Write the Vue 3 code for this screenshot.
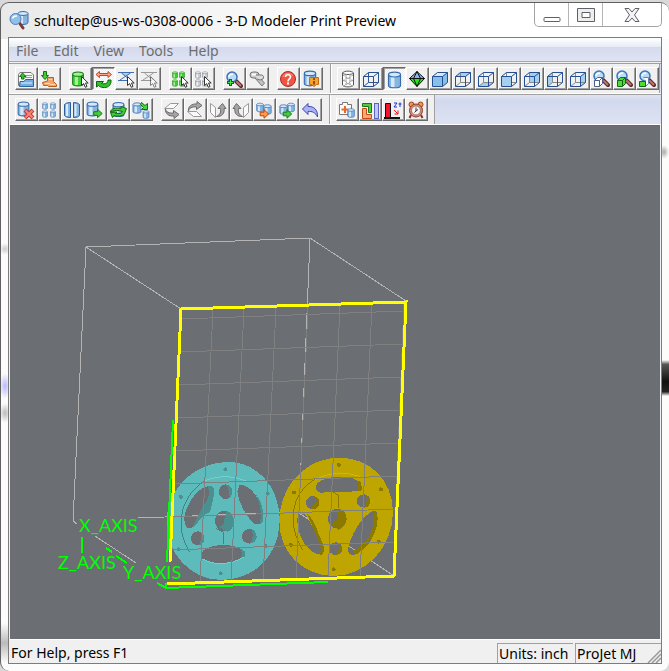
<script setup>
const menus = ['File', 'Edit', 'View', 'Tools', 'Help']

const mainBar = [
  [['open', 'Open'], ['import', 'Import']],
  [['select', 'Select'], ['move', 'Move and rotate', true], ['pick', 'Pick'], ['pickoff', 'Unpick']],
  [['selall', 'Select all'], ['selnone', 'Select none']],
  [['zoomin', 'Zoom in'], ['measure', 'Measure']],
  [['help', 'Help'], ['about', 'About']],
]

const viewBar = [
  [
    ['mesh', 'Mesh'], ['cube-wire', 'Wireframe'], ['solid', 'Shaded', true], ['octa', 'Perspective'],
    ['cube-solid', 'Isometric'], ['cube-top', 'Top'], ['cube-bottom', 'Bottom'], ['cube-front', 'Front'],
    ['cube-back', 'Back'], ['cube-left', 'Left'], ['cube-right', 'Right'],
    ['zoomwire', 'Zoom to volume'], ['zoompart', 'Zoom to parts'], ['zoomsel', 'Zoom to selection'],
  ],
]

const partBar = [
  [['delete', 'Delete'], ['array', 'Array'], ['mirror', 'Mirror'], ['shift', 'Move'], ['spin', 'Spin'], ['scale', 'Scale']],
  [['flip1', 'Flip down'], ['flip2', 'Flip up'], ['flip3', 'Flip left'], ['flip4', 'Flip right'], ['copy', 'Copy'], ['paste', 'Paste'], ['undo', 'Undo']],
]

const jobBar = [
  [['repair', 'Check'], ['nest', 'Arrange'], ['zsort', 'Z height'], ['time', 'Estimate time']],
]

const cubes = {
  wire: '',
  solid: 'M3 7H13V17H3ZM3 7L8 3H18V13L13 17Z',
  top: 'M3 7L8 3H18L13 7Z',
  bottom: 'M3 17L8 13H18L13 17Z',
  front: 'M3 7H13V17H3Z',
  back: 'M8 3H18V13H8Z',
  left: 'M3 7L8 3V13L3 17Z',
  right: 'M13 7L18 3V13L13 17Z',
}

const columns = [[213, 310, 200, 582], [244, 309, 231, 581], [276, 308, 263, 580], [308, 307, 296, 579], [340, 305, 328, 577], [372, 304, 360, 577], [404, 304, 393, 576]]
const rows = Array.from({ length: 8 }, (_, i) => [181 - i * 1.5, 319 + i * 33, 404 - i * 1.4, 311 + i * 33])
</script>

<template>
  <svg class="sprite" width="0" height="0" aria-hidden="true">
    <symbol id="cyl" viewBox="0 0 12 15">
      <path class="f" d="M1 3V12C1 14.600 11 14.600 11 12V3Z" />
      <path class="h" d="M3 4H6V13.500H3Z" />
      <path class="o" d="M1 3V12C1 14.600 11 14.600 11 12V3" />
      <ellipse class="t" cx="6" cy="3" rx="5" ry="2" />
    </symbol>
    <symbol id="cursor" viewBox="0 0 8 12">
      <path d="M.5.5V9.500L2.700 7.600L4.300 11.300L6 10.500L4.500 7H7.200Z" fill="#fff" stroke="#333" />
    </symbol>
    <symbol id="arrow" viewBox="0 0 10 10">
      <path d="M.7 3.200H4.500V.8L9.200 5L4.500 9.200V6.800H.7Z" fill="var(--f)" stroke="currentColor" />
    </symbol>
    <symbol id="lens" viewBox="0 0 18 18">
      <path d="M11 10L16 15" stroke="#5c2828" stroke-width="4" stroke-linecap="round" />
      <path d="M12 11L15.500 14.500" stroke="#b97777" stroke-width="2" stroke-linecap="round" />
      <circle cx="7" cy="6" r="5" fill="#b9dcf8" stroke="#3d74b6" stroke-width="1.500" />
      <path d="M4 6C4 3.500 6 3 8 3.200" stroke="#fff" stroke-width="1.500" fill="none" />
    </symbol>
    <symbol id="bend" viewBox="0 0 20 20">
      <path d="M2.500 8.500L8.500 3.500H16.500L11.500 8.500Z" fill="#fafafa" stroke="#999" />
      <path d="M3.500 9C4 12 7 13.500 11.500 13V10.500L17 14.500L12 18.500V16C6.500 16.500 3 13.500 3.500 9Z" fill="#a5a5a5" stroke="#6c6c6c" />
    </symbol>

    <symbol id="i-open" viewBox="0 0 20 20">
      <path d="M2.500 16.500V5.500L4 3.500H15L17.500 6V16.500Z" fill="#f5f5f5" stroke="#777" />
      <path d="M9 6.500H16M9 8.500H16" stroke="#999" />
      <path d="M3.500 17.500L4 12.500H8L9.500 10.500H17.500V17.500Z" fill="#76aee0" stroke="#2e64a4" />
      <path d="M5 14H16" stroke="#b9dcf6" stroke-width="1.500" />
      <path d="M3.500 7.500L6.500 4L10 7.500H8V10H5.500V7.500Z" fill="#35c235" stroke="#137013" />
    </symbol>
    <symbol id="i-import" viewBox="0 0 20 20">
      <path d="M4.500 2.500H7.500V6.500H9.500L6 10.500L2.500 6.500H4.500Z" fill="#3fd02d" stroke="#176d12" />
      <path d="M8.500 8.500H14.500V12.500L17.500 15.500V17.500H9.500L8.500 16.500H4.500L3.500 13.500L8.500 12Z" fill="#f2a66b" stroke="#bd5d1d" />
      <path d="M10 10.500H13M6 14.500H10L12 15.500H16" stroke="#ffd9b5" fill="none" />
    </symbol>
    <symbol id="i-select" viewBox="0 0 20 20">
      <use class="green" href="#cyl" x="1" y="2" width="14" height="16" />
      <use href="#cursor" x="11" y="7" width="8" height="12" />
    </symbol>
    <symbol id="i-move" viewBox="0 0 20 20">
      <path d="M3 5.500L6.500 2.500V4.500H15V2.500L18.500 5.500L15 8.500V6.500H6.500V8.500Z" fill="#f9a88d" stroke="#c44520" />
      <path d="M3.500 12.500H10.500L8.500 14.500C12 15.500 15 14.500 15 11H18C18.500 17 14 19 10 18.500C7.500 18.200 6.500 17.500 5.500 16.500L3.500 18Z" fill="#32c02c" stroke="#0c650e" />
    </symbol>
    <symbol id="i-pick" viewBox="0 0 20 20">
      <path d="M5 4H15L10 8Z" fill="#a9cbe9" />
      <path d="M2 3.500H18M2 11.500H13M5.500 4L14 11M14.500 4L4 11" fill="none" stroke="#3f70ad" />
      <use href="#cursor" x="11" y="7" width="8" height="12" />
    </symbol>
    <symbol id="i-pickoff" viewBox="0 0 20 20">
      <path d="M2 3.500H18M2 11.500H13M5.500 4L14 11M14.500 4L4 11" fill="none" stroke="#999" />
      <use href="#cursor" x="11" y="7" width="8" height="12" opacity=".6" />
    </symbol>
    <symbol id="i-selall" viewBox="0 0 20 20">
      <g class="green">
        <use href="#cyl" x="2" y="2" width="6" height="8" /><use href="#cyl" x="9" y="2" width="6" height="8" />
        <use href="#cyl" x="2" y="10" width="6" height="8" /><use href="#cyl" x="9" y="10" width="6" height="8" />
      </g>
      <use href="#cursor" x="11" y="7" width="8" height="12" />
    </symbol>
    <symbol id="i-selnone" viewBox="0 0 20 20">
      <g class="gray">
        <use href="#cyl" x="2" y="2" width="6" height="8" /><use href="#cyl" x="9" y="2" width="6" height="8" />
        <use href="#cyl" x="2" y="10" width="6" height="8" /><use href="#cyl" x="9" y="10" width="6" height="8" />
      </g>
      <use href="#cursor" x="11" y="7" width="8" height="12" />
    </symbol>
    <symbol id="i-zoomin" viewBox="0 0 20 20">
      <use href="#lens" x="1" y="2" width="18" height="18" />
      <path d="M6.500 10V17M3 13.500H10" stroke="#0c6a10" stroke-width="3" />
      <path d="M6.500 11V16M4 13.500H9" stroke="#4ee044" />
    </symbol>
    <symbol id="i-measure" viewBox="0 0 20 20">
      <path d="M8 9L15 17L17.500 14L11 7Z" fill="#c4c4c4" stroke="#777" />
      <rect x="3" y="3" width="9" height="6" rx="3" fill="#ccc" stroke="#777" />
      <path d="M8 6H15Q18 7 16 10Q13 12 10 10" fill="#ddd" stroke="#777" />
      <path d="M5 5.500H9" stroke="#fff" stroke-width="2" />
    </symbol>
    <symbol id="i-help" viewBox="0 0 20 20">
      <circle cx="10" cy="10" r="7.500" fill="#ee5543" stroke="#ad2d22" />
      <path d="M5 8C6 4 12 3 15 7" stroke="#f79b8e" fill="none" />
      <path d="M7.500 8C7.500 5 12.500 5 12.500 8C12.500 10 10 10 10 12.500" fill="none" stroke="#fff" stroke-width="1.600" />
      <rect x="9" y="13.500" width="2" height="2" fill="#fff" />
    </symbol>
    <symbol id="i-about" viewBox="0 0 20 20">
      <use class="blue" href="#cyl" x="2" y="1" width="14" height="17" />
      <path d="M8.500 8.500H17.500V15.500H15.500L13 17.500L10.500 15.500H8.500Z" fill="#f6a132" stroke="#c36b12" />
      <path d="M12 10H14M13 12V15.500" stroke="#6c3b05" stroke-width="1.500" />
    </symbol>

    <symbol id="i-mesh" viewBox="0 0 20 20">
      <path d="M4.500 4V16C6 18.500 14 18.500 15.500 16V4C14 1.500 6 1.500 4.500 4C6 6 14 6 15.500 4" fill="#fff" stroke="#555" />
      <path d="M5 6L15 12M5 11L14 17M15 6L5 12M15 11L6 17M8 5V18M12 5V18" fill="none" stroke="#999" stroke-dasharray="2 1" />
    </symbol>
    <symbol id="i-solid" viewBox="0 0 20 20">
      <use class="blue" href="#cyl" x="3" y="2" width="15" height="18" />
    </symbol>
    <symbol id="i-octa" viewBox="0 0 20 20">
      <path d="M10 2.500L17.500 9.500H2.500Z" fill="#86b6e5" />
      <path d="M2.500 9.500H17.500L10 17.500Z" fill="#28e31c" />
      <path d="M10 2.500L17.500 9.500L10 17.500L2.500 9.500ZM2.500 9.500H17.500M10 2.500L6.500 9.500L10 17.500L13.500 9.500Z" fill="none" stroke="#111" />
    </symbol>
    <symbol v-for="(face, key) in cubes" :id="'i-cube-' + key" :key="key" viewBox="0 0 20 20">
      <g transform="translate(-.5 .5)">
        <path :d="face" :fill="key === 'solid' ? '#86bfe8' : '#a3d0f0'" />
        <path v-if="key === 'solid'" d="M3 7L8 3H18L13 7Z" fill="#d2eafb" />
      </g>
      <path v-if="key !== 'solid' && key !== 'front'" d="M7.500 3.500V13.500H17.500M7.500 13.500L2.500 17.500" fill="none" :stroke="key === 'wire' ? '#34568f' : '#888'" />
      <path v-if="key === 'front'" d="M7.500 3.500V7.500M17.500 13.500H12.500" stroke="#888" />
      <path d="M2.500 7.500H12.500V17.500H2.500ZM2.500 7.500L7.500 3.500H17.500L12.500 7.500M17.500 3.500V13.500L12.500 17.500" fill="none" stroke="#264f91" />
    </symbol>
    <symbol id="i-zoomwire" viewBox="0 0 20 20">
      <use href="#lens" x="1" y="1" width="18" height="18" />
      <path d="M3.500 11.500H8.500V17.500H3.500ZM3.500 11.500L6.500 8.500H11.500V14.500L8.500 17.500M8.500 11.500L11.500 8.500" fill="#fff" stroke="#4b5d88" />
    </symbol>
    <symbol id="i-zoompart" viewBox="0 0 20 20">
      <use href="#lens" x="1" y="1" width="18" height="18" />
      <path d="M3.500 11.500H8.500V17.500H3.500ZM3.500 11.500L6.500 8.500H11.500V14.500L8.500 17.500M8.500 11.500L11.500 8.500" fill="#4bdc35" stroke="#126a12" />
    </symbol>
    <symbol id="i-zoomsel" viewBox="0 0 20 20">
      <use href="#lens" x="1" y="1" width="18" height="18" />
      <path d="M6.500 8.500H11.500V14.500L8.500 17.500V11.500" fill="#fff" stroke="#6b7ca6" />
      <path d="M2.500 12.500H8.500V17.500H2.500Z" fill="#4bdc35" stroke="#126a12" />
    </symbol>

    <symbol id="i-delete" viewBox="0 0 20 20">
      <use class="blue" href="#cyl" x="1" y="1" width="13" height="16" />
      <path d="M9 10L17 18M17 10L9 18" stroke="#c43a30" stroke-width="4" />
      <path d="M9.500 10.500L16.500 17.500M16.500 10.500L9.500 17.500" stroke="#fa8377" stroke-width="2" />
    </symbol>
    <symbol id="i-array" viewBox="0 0 20 20">
      <g class="blue">
        <use href="#cyl" x="3" y="2" width="6" height="8" /><use href="#cyl" x="11" y="2" width="6" height="8" />
        <use href="#cyl" x="3" y="10" width="6" height="8" /><use href="#cyl" x="11" y="10" width="6" height="8" />
      </g>
    </symbol>
    <symbol id="i-mirror" viewBox="0 0 20 20">
      <path d="M8.500 2.500V17.500Q3.500 17.500 2.500 15.500V4.500Q4 2.500 8.500 2.500ZM11.500 2.500V17.500Q16.500 17.500 17.500 15.500V4.500Q16 2.500 11.500 2.500Z" fill="#8ab7df" stroke="#2c5d9d" />
      <path d="M5 4V16M13.500 4V16" stroke="#d8ebf8" stroke-width="2" />
    </symbol>
    <symbol id="i-shift" viewBox="0 0 20 20">
      <use class="blue" href="#cyl" x="1" y="1" width="13" height="16" />
      <use class="green" href="#arrow" x="8" y="8" width="10" height="11" />
    </symbol>
    <symbol id="i-spin" viewBox="0 0 20 20">
      <use class="blue" href="#cyl" x="4" y="1" width="13" height="17" />
      <path d="M2.500 12C2.500 8.500 8 7.500 13 8.500V6.500L18.500 8.500L17 12.500C16.500 16 10 17 6 15.500L4.500 17.500L2.500 12.500L9 12L7.500 13.500C11 14 14 13.500 14.500 11.500C11 10 6 10 2.500 12Z" fill="#42cc35" stroke="#136b13" />
    </symbol>
    <symbol id="i-scale" viewBox="0 0 20 20">
      <use class="blue" href="#cyl" x="1" y="2" width="10" height="12" />
      <use class="blue" href="#cyl" x="11" y="10" width="8" height="9" />
      <path d="M10.500 2.500L14 5.500L16.500 3.500V9.500H10.500L12.500 7.500L9.500 4.500Z" fill="#49d63b" stroke="#136b13" />
    </symbol>
    <symbol id="i-flip1" viewBox="0 0 20 20"><use href="#bend" width="20" height="20" /></symbol>
    <symbol id="i-flip2" viewBox="0 0 20 20"><g transform="matrix(1 0 0 -1 0 20)"><use href="#bend" width="20" height="20" /></g></symbol>
    <symbol id="i-flip3" viewBox="0 0 20 20">
      <path d="M2.500 3.500L7.500 7.500V17.500L2.500 12.500Z" fill="#fafafa" stroke="#999" />
      <path d="M8.500 16.500C12.500 14.500 13 12 12.500 8.500H10L14.500 3.500L18 8.500H16C17 13 14 17 8.500 16.500Z" fill="#a5a5a5" stroke="#6c6c6c" />
    </symbol>
    <symbol id="i-flip4" viewBox="0 0 20 20">
      <g transform="matrix(-1 0 0 1 20 0)">
        <path d="M2.500 3.500L7.500 7.500V17.500L2.500 12.500Z" fill="#fafafa" stroke="#999" />
        <path d="M8.500 16.500C12.500 14.500 13 12 12.500 8.500H10L14.500 3.500L18 8.500H16C17 13 14 17 8.500 16.500Z" fill="#a5a5a5" stroke="#6c6c6c" />
      </g>
    </symbol>
    <symbol id="i-copy" viewBox="0 0 20 20">
      <use class="blue" href="#cyl" x="2" y="1" width="8" height="13" />
      <use class="blue" href="#cyl" x="9" y="4" width="9" height="11" />
      <use class="orange" href="#arrow" x="5" y="9" width="11" height="10" />
    </symbol>
    <symbol id="i-paste" viewBox="0 0 20 20">
      <use class="blue" href="#cyl" x="10" y="1" width="8" height="13" />
      <use class="blue" href="#cyl" x="2" y="4" width="9" height="11" />
      <use class="green" href="#arrow" x="5" y="9" width="11" height="10" />
    </symbol>
    <symbol id="i-undo" viewBox="0 0 20 20">
      <path d="M2.500 9L8 3.500V6.500C14 6 18 10 17.500 17C15.500 12.500 12 11 8 11.500V14.500Z" fill="#a9b3f4" stroke="#3a46b2" />
    </symbol>

    <symbol id="i-repair" viewBox="0 0 20 20">
      <path d="M2.500 4.500H5.500V2.500H10.500V4.500H14.500V14.500H2.500Z" fill="#fafafa" stroke="#777" />
      <path d="M8 6V13M4.500 9.500H11.500" stroke="#e8672b" stroke-width="2" />
      <use class="blue" href="#cyl" x="9" y="8" width="10" height="10" />
    </symbol>
    <symbol id="i-nest" viewBox="0 0 20 20">
      <path d="M2.500 3.500H11.500V12.500H8.500V6.500H2.500Z" fill="#53ca42" stroke="#16761a" />
      <path d="M2.500 8.500H6.500V14.500H11.500V18.500H2.500Z" fill="#f9a870" stroke="#c14b14" />
      <rect x="14.500" y="3.500" width="4" height="15" fill="#bfc6fb" stroke="#5a66bd" />
    </symbol>
    <symbol id="i-zsort" viewBox="0 0 20 20">
      <path d="M2.500 17.500V3.500H7.500V17.500" fill="#ef1430" stroke="#111" />
      <path d="M1 18H17" stroke="#111" stroke-width="2" />
      <path d="M11 3H14L11 7H14M17 2.500V7M15.500 4H18.500" fill="none" stroke="#2430d8" />
      <path d="M11 10L15 14M15 10.500V14H11.500" fill="none" stroke="#f01020" />
    </symbol>
    <symbol id="i-time" viewBox="0 0 20 20">
      <path d="M5 15L3.500 18M15 15L16.500 18" stroke="#7b3525" stroke-width="2" />
      <circle cx="5.500" cy="4.500" r="2.500" fill="#ef9c52" stroke="#974318" /><circle cx="14.500" cy="4.500" r="2.500" fill="#ef9c52" stroke="#974318" />
      <circle cx="10" cy="10.500" r="6.500" fill="#e28c77" stroke="#8a3b2a" />
      <circle cx="10" cy="10.500" r="4.500" fill="#f4f7fa" stroke="#aa6c60" />
      <path d="M10 7.500V11L12 9.500M10 11L8.500 12.500" fill="none" stroke="#333" />
    </symbol>
    <symbol id="i-app" viewBox="0 0 20 20">
      <use class="blue" href="#cyl" x="8" y="0" width="12" height="16" />
      <path d="M10.500 13L14 18" stroke="#7d3838" stroke-width="3" stroke-linecap="round" />
      <circle cx="6.500" cy="9" r="5.500" fill="#8fc0ea" stroke="#4f80b9" />
      <path d="M3.500 8.500Q4.500 5.500 8 6" fill="none" stroke="#fff" stroke-width="1.500" />
    </symbol>
  </svg>

  <div class="window">
    <header class="titlebar">
      <svg class="appicon" aria-hidden="true"><use href="#i-app" /></svg>
      <h1>schultep@us-ws-0308-0006 - 3-D Modeler Print Preview</h1>
      <div class="caption">
        <button type="button" aria-label="Minimize">
          <svg width="18" height="18" viewBox="0 0 18 18"><rect x="1" y="11.500" width="16" height="4" rx="1" fill="#fff" stroke="#5d6068" /></svg>
        </button>
        <button type="button" aria-label="Maximize">
          <svg width="18" height="18" viewBox="0 0 18 18"><path d="M.5 2.500H17.500V15.500H.5ZM5 6.500V11.500H13V6.500Z" fill="#eee" fill-rule="evenodd" stroke="#5d6068" /></svg>
        </button>
        <button type="button" aria-label="Close" class="close">
          <svg width="18" height="18" viewBox="0 0 18 18"><path d="M2 2.500H6L9 6L12 2.500H16L11.500 9L16 15.500H12L9 12L6 15.500H2L6.500 9Z" fill="#f3f3f3" stroke="#5d6068" stroke-linejoin="round" /></svg>
        </button>
      </div>
    </header>

    <div class="client">
      <nav class="menubar">
        <button v-for="m in menus" :key="m" type="button">{{ m }}</button>
      </nav>

      <div class="row">
        <div v-for="(bar, b) in [mainBar, viewBar]" :key="b" class="toolbar" role="toolbar">
          <div v-for="(group, g) in bar" :key="g" class="group">
            <button v-for="[icon, label, on] in group" :key="icon" type="button" :class="['tool', { on }]" :aria-label="label">
              <svg><use :href="'#i-' + icon" /></svg>
            </button>
          </div>
        </div>
      </div>
      <div class="row">
        <div v-for="(bar, b) in [partBar, jobBar]" :key="b" class="toolbar" role="toolbar">
          <div v-for="(group, g) in bar" :key="g" class="group">
            <button v-for="[icon, label] in group" :key="icon" type="button" class="tool" :aria-label="label">
              <svg><use :href="'#i-' + icon" /></svg>
            </button>
          </div>
        </div>
      </div>

      <main class="viewport">
        <svg class="scene" role="img" aria-label="Build volume with two wheels">
          <g transform="translate(-10 -126)">
            <path class="edge" d="M181 309L86 247L310 238L406 301M86 247L73 521L77 524M95 536L136 563M310 238L299 513L394 576M138 518L299 512" />
            <g transform="translate(160 440) scale(.3333)">
              <path class="teal" fill-rule="evenodd" d="M200 66C295 64 360 145 359 240C358 345 285 420 182 420C90 418 20 340 20 245C20 145 105 68 200 66Z
                M147 138C115 140 75 195 73 235C72 262 85 270 98 262L160 165C165 145 158 138 147 138Z
                M238 135C265 130 300 170 308 220C312 245 305 257 285 252C262 235 235 190 232 155Z
                M122 345C125 325 160 315 190 315C225 315 255 325 256 345C245 362 215 370 180 370C150 370 122 360 122 345Z
                M177 155a20 22 0 1 0 40 0a20 22 0 1 0-40 0Z M93 295a20 21 0 1 0 40 0a20 21 0 1 0-40 0Z
                M246 289a22 22 0 1 0 44 0a22 22 0 1 0-44 0Z M165 243a28 31 0 1 0 56 0a28 31 0 1 0-56 0Z" />
              <g class="tealdark">
                <path d="M143 138C170 130 165 165 150 215L130 227L106 256L97 262L128 200Q155 170 143 138Z" />
                <path d="M196 212Q221 215 221 245Q219 270 202 275L177 261Q197 258 192 236L200 228Z" />
                <path d="M198 134Q217 136 217 156Q214 175 205 175Q213 155 198 134Z" />
                <path d="M123 277Q133 283 133 296Q130 313 116 316Q128 295 123 277Z" />
                <path d="M275 269Q292 278 290 293Q285 310 272 310Q283 290 275 269Z" />
                <path d="M256 335V350L240 355Q255 340 236 325ZM285 160Q315 195 309 245L300 253Q308 200 285 160Z" />
                <circle cx="196" cy="88" r="6" /><circle cx="63" cy="171" r="6" /><circle cx="323" cy="160" r="6" />
                <circle cx="182" cy="400" r="6" /><circle cx="55" cy="328" r="6" /><circle cx="317" cy="318" r="6" />
              </g>
              <path class="tealline" d="M135 122C65 165 40 255 88 335M167 265L192 277V313" />
              <path class="teallip" d="M135 122Q200 95 265 126M122 355Q185 390 252 352" />

              <path class="gold" fill-rule="evenodd" d="M540 53C635 55 700 125 699 220C697 325 615 408 520 408C425 406 357 335 358 240C360 135 440 52 540 53Z
                M468 140C470 120 510 110 540 110C575 110 603 120 605 140C605 150 600 154 590 154L480 158C470 155 468 148 468 140Z
                M412 240C410 220 430 215 440 228L490 320C495 340 485 346 470 342C430 325 412 275 412 240Z
                M640 213C652 210 654 225 652 245C645 295 615 335 580 345C565 345 563 335 566 318C580 270 610 225 640 213Z
                M438 188a20 20 0 1 0 40 0a20 20 0 1 0-40 0Z M591 183a20 20 0 1 0 40 0a20 20 0 1 0-40 0Z
                M507 326a20 19 0 1 0 40 0a20 19 0 1 0-40 0Z M504 236a28 30 0 1 0 56 0a28 30 0 1 0-56 0Z" />
              <g class="golddark">
                <path d="M540 207Q561 215 560 240Q555 260 540 268L512 253Q538 240 533 220Z" />
                <path d="M440 218Q465 245 475 280L492 320Q495 345 478 345Q490 330 470 290ZM643 213Q656 220 652 250Q640 310 590 343L578 334Q645 300 643 213Z" />
                <path d="M600 122Q608 140 604 152L590 154Q600 145 592 122ZM463 169Q480 175 478 190Q470 205 460 208L452 200L474 184Z" />
                <path d="M618 164Q633 175 631 188Q625 203 613 203Q625 185 618 164ZM537 310Q549 320 546 330Q540 343 528 344Q540 330 537 310Z" />
                <circle cx="537" cy="75" r="6" /><circle cx="402" cy="158" r="6" /><circle cx="663" cy="148" r="6" />
                <circle cx="521" cy="388" r="6" /><circle cx="393" cy="315" r="6" /><circle cx="656" cy="305" r="6" />
              </g>
              <path class="goldline" d="M465 118C390 160 380 260 430 330M518 155L536 167V205M512 253L536 268" />
              <path class="goldlip" d="M465 118Q535 85 600 110" />
            </g>
            <g class="grid">
              <line v-for="([x1, y1, x2, y2], i) in [...columns, ...rows]" :key="i" :x1="x1" :y1="y1" :x2="x2" :y2="y2" />
            </g>
            <path class="axis" d="M173 420L167 562M166 588L328 582M157 583L166 588V583M82 537V553M106 548L112 552M116 556L127 563" />
            <path class="front" d="M170 562L181 309L406 302L394 576L167 584" />
            <g class="labels">
              <text x="79" y="532">X_AXIS</text>
              <text x="58" y="569">Z_AXIS</text>
              <text x="123" y="579">Y_AXIS</text>
            </g>
          </g>
        </svg>
      </main>

      <footer class="status">
        <span class="hint">For Help, press F1</span>
        <span class="cell">Units: inch</span>
        <span class="cell last">ProJet MJ</span>
        <svg class="grip" width="14" height="14" viewBox="0 0 14 14" aria-hidden="true"><path d="M1 14L14 1M5 14L14 5M9 14L14 9" stroke="#999" stroke-width="1.500" /></svg>
      </footer>
    </div>
  </div>
</template>

<style>
body {
  margin: 0;
  background: #d9d9d9;
}
</style>

<style scoped>
.sprite {
  position: absolute;
}
.f { fill: var(--f); }
.h { fill: var(--h); }
.o { fill: none; stroke: currentColor; }
.t { fill: var(--h); stroke: currentColor; }
.blue { --f: #86b5e0; --h: #d3e8f8; color: #3a6cab; }
.green { --f: #3fce36; --h: #a5f090; color: #187a1a; }
.gray { --f: #c9ccd2; --h: #f3f3f3; color: #6d7482; }
.orange { --f: #ff9a4d; --h: #ffd0a8; color: #b7470c; }

.window {
  box-sizing: border-box;
  display: flex;
  flex-direction: column;
  min-height: calc(100vh - 2px);
  margin-top: 2px;
  padding: 0 7px 7px;
  border: 1px solid #606060;
  border-width: 1px 0 0 1px;
  border-radius: 9px;
  background:
    linear-gradient(#fff0, #555 12%, #111 60%, #222 88%, #fff0) right 357px / 7px 36px no-repeat,
    radial-gradient(#aaa, #fff0 70%) right 142px / 10px 14px no-repeat,
    radial-gradient(#b8b8f8, #fff0 70%) -2px 370px / 12px 26px no-repeat,
    radial-gradient(#bbb, #fff0 70%) -2px 400px / 12px 20px no-repeat,
    radial-gradient(#ccc, #fff0 70%) -2px 240px / 12px 12px no-repeat,
    linear-gradient(#fff0, #bbb, #fff0) left 620px / 7px 40px no-repeat,
    linear-gradient(100deg, #e9e9e9, #f4f4f4 30%, #fff 50%) top / 100% 36px no-repeat,
    #fcfcfc;
  font-family: "Noto Sans", "Open Sans", sans-serif;
  font-size: 14px;
  color: #000;
}
.titlebar {
  display: flex;
  align-items: center;
  height: 34px;
}
.appicon {
  width: 20px;
  height: 20px;
  margin: 0 5px 0 1px;
}
h1 {
  flex: 1;
  margin: 0;
  font-size: 14px;
  font-weight: 400;
  white-space: nowrap;
}
.caption {
  display: flex;
  align-self: flex-start;
  height: 23px;
  border: 1px solid #a3a3a3;
  border-top: 0;
  border-radius: 0 0 5px 5px;
}
.caption button {
  display: flex;
  align-items: center;
  justify-content: center;
  width: 34px;
  padding: 0;
  border: 0;
  border-right: 1px solid #b5b5b5;
  background: none;
}
.caption .close {
  width: 58px;
  border-right: 0;
}
.client {
  position: relative;
  display: flex;
  flex: 1;
  flex-direction: column;
  border: 1px solid #7c7c7c;
  background: #f0f0f0;
}
.menubar {
  display: flex;
  gap: 15px;
  height: 23px;
  padding: 0 7px;
  border-bottom: 1px solid #a5a6b5;
  background: linear-gradient(#fff, #e8ecf6 38%, #d4daed 40%, #e0e4f3);
}
.menubar button {
  padding: 2px 0 0;
  border: 0;
  background: none;
  color: #6d6d6d;
  font: inherit;
}
.row {
  display: flex;
  height: 29px;
  border-top: 1px solid #a0a0a0;
  border-bottom: 1px solid #fff;
  background: linear-gradient(#dfe3f2, #d3d9ed 20%, #dde2f3);
}
.menubar + .row {
  margin-top: 1px;
}
.toolbar {
  display: flex;
  align-items: center;
  gap: 8px;
  padding: 0 7px 0 5px;
  border-right: 1px solid #a0a0a0;
  border-left: 1px solid #fff;
  background: #f0f0f0;
}
.toolbar:last-child {
  padding-right: 0;
}
.row + .row .toolbar:last-child {
  padding-right: 6px;
}
.group {
  display: flex;
}
.tool {
  box-sizing: border-box;
  width: 23px;
  height: 23px;
  padding: 0;
  border: 1px solid;
  border-color: #fff #696969 #696969 #fff;
  background: #f0f0f0;
  box-shadow: inset -1px -1px #a0a0a0;
}
.tool.on {
  border-color: #696969 #fff #fff #696969;
  background: repeating-conic-gradient(#fff 0 25%, #ededed 0 50%) 0 0 / 2px 2px;
  box-shadow: inset 1px 1px #a0a0a0;
}
.tool svg {
  display: block;
  width: 20px;
  height: 20px;
}
.viewport {
  position: relative;
  flex: 1;
  min-height: 300px;
  margin: 0 1px;
  border-top: 1px solid #696969;
  border-bottom: 1px solid #fff;
  background: #6b6e73;
}
.scene {
  position: absolute;
  inset: 0;
  width: 100%;
  height: 100%;
  shape-rendering: crispEdges;
}
.scene path, .scene line { fill: none; }
.scene .edge { stroke: #b4b4b4; }
.scene .teal { fill: #5ebbbb; }
.scene .tealdark > * { fill: #4a9090; }
.scene .tealline { stroke: #3f8585; stroke-width: 3; }
.scene .teallip { stroke: #6fd0d0; stroke-width: 3; }
.scene .gold { fill: #bfa500; }
.scene .golddark > * { fill: #8c7900; }
.scene .goldline { stroke: #8c7900; stroke-width: 3; }
.scene .goldlip { stroke: #d4b800; stroke-width: 3; }
.grid { stroke: #808080; }
.scene .front { stroke: #ff0; stroke-width: 3; }
.scene .axis { stroke: #0f0; stroke-width: 2; }
.labels {
  fill: #0f0;
  font-family: Lato, sans-serif;
  font-size: 18px;
}
.status {
  display: flex;
  height: 23px;
}
.status span {
  box-sizing: border-box;
  padding: 0 1px;
  line-height: 20px;
  white-space: nowrap;
}
.status .hint {
  flex: 1;
  padding: 3px 2px 0;
}
.status .cell {
  width: 76px;
  margin: 3px 2px 0 0;
  border-top: 1px solid #a0a0a0;
  border-left: 1px solid #a0a0a0;
}
.status .last {
  width: 86px;
  margin-right: 0;
}
.grip {
  position: absolute;
  right: 0;
  bottom: 0;
}
</style>
